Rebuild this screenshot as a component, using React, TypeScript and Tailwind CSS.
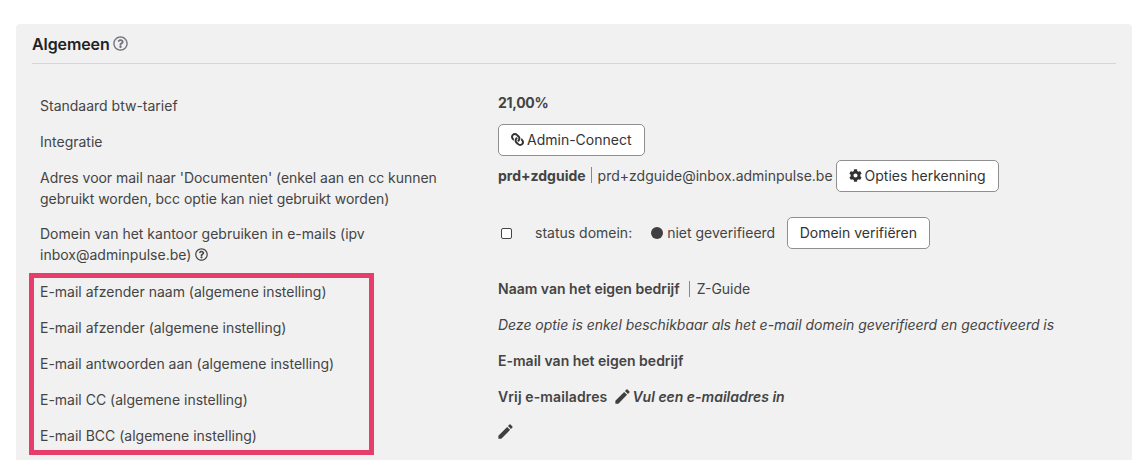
import React from "react";
import { FaCog, FaLink, FaRegQuestionCircle } from "react-icons/fa";
import { MdEdit } from "react-icons/md";

const Row: React.FC<{
  label: React.ReactNode;
  children?: React.ReactNode;
  className?: string;
  valueClass?: string;
}> = ({ label, children, className = "h-[36px]", valueClass = "pt-[4px]" }) => (
  <div className={`flex items-start ${className}`}>
    <div className="w-[458px] shrink-0 pr-[22px] pt-[7px] leading-[21px]">{label}</div>
    <div className={`flex items-center min-w-0 leading-[21px] ${valueClass}`}>{children}</div>
  </div>
);

const buttonClass =
  "h-[32px] rounded-[5px] border border-[#8f8f8f] bg-white px-[12px] pb-[2px] flex items-center text-[14px] text-[#333] whitespace-nowrap";

export default function App() {
  return (
    <div className="relative h-[460px] overflow-hidden bg-white font-['Inter',sans-serif] text-[14px] text-[#444]">
      <div className="ml-[16px] mr-[11px] mt-[24px] h-[436px] rounded-t-[4px] bg-[#f1f1f1] px-[16px]">
        <div className="flex h-[40px] items-center gap-[3px] border-b border-[#d6d6d6]">
          <h2 className="text-[16px] font-semibold tracking-[-0.1px] text-[#222]">Algemeen</h2>
          <FaRegQuestionCircle className="text-[15px] text-[#77737f]" />
        </div>
        <div className="pl-[8px] pt-[24px]">
          <Row label="Standaard btw-tarief">
            <span className="font-bold tracking-[-0.3px]">21,00%</span>
          </Row>
          <Row label="Integratie" valueClass="pt-0">
            <button className={`${buttonClass} gap-[3px]`}>
              <FaLink className="-scale-x-100 text-[13px]" />
              Admin-Connect
            </button>
          </Row>
          <Row
            className="h-[56px]"
            valueClass="pt-0"
            label={
              <span className="tracking-[-0.03px]">
                Adres voor mail naar 'Documenten' (enkel aan en cc kunnen gebruikt worden, bcc optie kan niet gebruikt worden)
              </span>
            }
          >
            <div className="flex items-center whitespace-nowrap">
              <span className="mb-[2px] font-bold">prd+zdguide</span>
              <span className="ml-[5px] mr-[6px] mb-[2px] h-[16px] w-px bg-[#888]" />
              <span className="mb-[2px]">prd+zdguide@inbox.adminpulse.be</span>
              <button className={`${buttonClass} ml-[3px] gap-[3px]`}>
                <FaCog className="text-[13px]" />
                Opties herkenning
              </button>
            </div>
          </Row>
          <Row
            className="h-[58px]"
            valueClass="pt-[1px]"
            label={
              <>
                Domein van het kantoor gebruiken in e-mails (ipv inbox@adminpulse.be){" "}
                <FaRegQuestionCircle className="inline align-[-1px] text-[13px] text-[#444]" />
              </>
            }
          >
            <div className="flex items-center whitespace-nowrap">
              <span className="ml-[3px] h-[11px] w-[11px] rounded-[2px] border border-[#444] bg-white" />
              <span className="ml-[23px] mb-[2px]">status domein:</span>
              <span className="ml-[19px] h-[12px] w-[12px] rounded-full bg-[#3f3f3f]" />
              <span className="ml-[4px] mb-[2px]">niet geverifieerd</span>
              <button className={`${buttonClass} ml-[12px] !px-[11.5px]`}>Domein verifiëren</button>
            </div>
          </Row>
          <Row label="E-mail afzender naam (algemene instelling)">
            <span className="font-semibold">Naam van het eigen bedrijf</span>
            <span className="ml-[9px] mr-[7px] h-[16px] w-px bg-[#888]" />
            <span>Z-Guide</span>
          </Row>
          <Row label="E-mail afzender (algemene instelling)">
            <span className="italic whitespace-nowrap tracking-[-0.03px]">
              Deze optie is enkel beschikbaar als het e-mail domein geverifieerd en geactiveerd is
            </span>
          </Row>
          <Row label="E-mail antwoorden aan (algemene instelling)">
            <span className="font-semibold">E-mail van het eigen bedrijf</span>
          </Row>
          <Row label="E-mail CC (algemene instelling)">
            <span className="font-semibold tracking-[0.12px]">Vrij e-mailadres</span>
            <MdEdit className="ml-[6px] text-[19px] text-[#3f3f3f]" />
            <span className="font-semibold italic">Vul een e-mailadres in</span>
          </Row>
          <Row label="E-mail BCC (algemene instelling)">
            <MdEdit className="-ml-[2px] text-[19px] text-[#3f3f3f]" />
          </Row>
        </div>
      </div>
      {/* annotation over the screenshot */}
      <div className="absolute left-[29px] top-[273px] h-[182px] w-[345px] border-[5px] border-[#e63d6a]" />
    </div>
  );
}
